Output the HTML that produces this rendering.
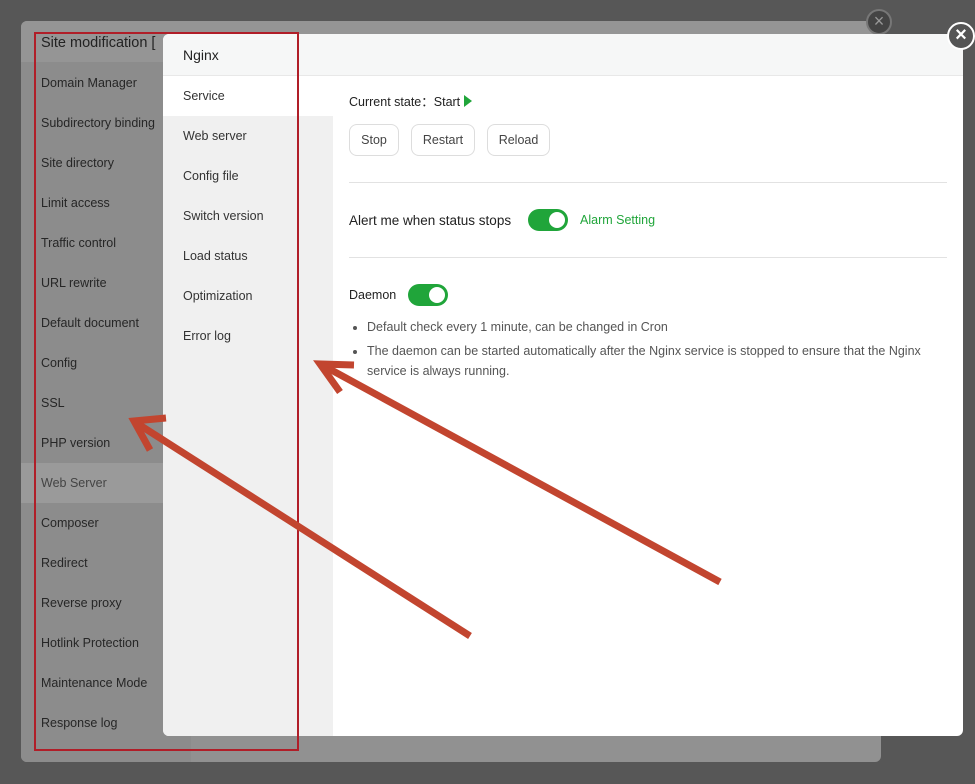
<!DOCTYPE html>
<html><head><style>
*{margin:0;padding:0;box-sizing:border-box}
body{width:975px;height:784px;background:#575757;font-family:"Liberation Sans",sans-serif;position:relative;overflow:hidden;font-size:13px;color:#333}
.abs{position:absolute}
.back{left:21px;top:21px;width:860px;height:741px;background:#919191;border-radius:6px;overflow:hidden}
.bside{left:0;top:41px;width:170px;height:700px;background:#8c8c8c}
.bitem{position:absolute;left:20px;color:#262626;font-size:12.5px}
.front{left:163px;top:34px;width:800px;height:702px;background:#fff;border-radius:6px;overflow:hidden}
.fhead{left:0;top:0;width:800px;height:42px;background:#f6f7f7;border-bottom:1px solid #e8e8e8;padding:13px 20px;font-size:14px;color:#222}
.fside{left:0;top:42px;width:170px;height:660px;background:#f0f0f0}
.fitem{position:absolute;left:20px;font-size:12.5px;color:#333}
.btn{position:absolute;top:90px;height:32px;border:1px solid #ddd;border-radius:8px;font-size:12.5px;color:#444;text-align:center;line-height:30px;background:#fff}
.sw{position:absolute;width:40px;height:22px;border-radius:11px;background:#20a53a}
.sw:after{content:"";position:absolute;right:3px;top:3px;width:16px;height:16px;border-radius:50%;background:#fff}
.hr{position:absolute;left:186px;width:598px;height:1px;background:#e2e2e2}
</style></head><body>
<div class="abs back">
 <div class="abs" style="left:0;top:0;width:860px;height:41px;background:#959595"></div>
 <div style="position:absolute;left:20px;top:14px;font-size:14.5px;color:#222">Site modification [</div>
 <div class="abs bside"></div>
 <div class="abs" style="left:0;top:442px;width:170px;height:40px;background:#9a9a9a"></div>
 <div class="bitem" style="top:55px">Domain Manager</div>
 <div class="bitem" style="top:95px">Subdirectory binding</div>
 <div class="bitem" style="top:135px">Site directory</div>
 <div class="bitem" style="top:175px">Limit access</div>
 <div class="bitem" style="top:215px">Traffic control</div>
 <div class="bitem" style="top:255px">URL rewrite</div>
 <div class="bitem" style="top:295px">Default document</div>
 <div class="bitem" style="top:335px">Config</div>
 <div class="bitem" style="top:375px">SSL</div>
 <div class="bitem" style="top:415px">PHP version</div>
 <div class="bitem" style="top:455px;color:#444">Web Server</div>
 <div class="bitem" style="top:495px">Composer</div>
 <div class="bitem" style="top:535px">Redirect</div>
 <div class="bitem" style="top:575px">Reverse proxy</div>
 <div class="bitem" style="top:615px">Hotlink Protection</div>
 <div class="bitem" style="top:655px">Maintenance Mode</div>
 <div class="bitem" style="top:695px">Response log</div>
</div>
<div class="abs" style="left:866px;top:9px;width:26px;height:26px;border-radius:50%;background:#444;border:2px solid #777;color:#999;font-size:18px;line-height:21px;text-align:center">×</div>
<div class="abs front">
 <div class="abs fhead">Nginx</div>
 <div class="abs fside"></div>
 <div class="abs" style="left:0;top:42px;width:170px;height:40px;background:#fff"></div>
 <div class="fitem" style="top:55px">Service</div>
 <div class="fitem" style="top:95px">Web server</div>
 <div class="fitem" style="top:135px">Config file</div>
 <div class="fitem" style="top:175px">Switch version</div>
 <div class="fitem" style="top:215px">Load status</div>
 <div class="fitem" style="top:255px">Optimization</div>
 <div class="fitem" style="top:295px">Error log</div>
 <div class="abs" style="left:186px;top:57px;font-size:12.5px;color:#222">Current state：Start <span style="display:inline-block;width:0;height:0;border-left:8px solid #20a53a;border-top:6px solid transparent;border-bottom:6px solid transparent;vertical-align:-1px"></span></div>
 <div class="btn" style="left:186px;width:50px">Stop</div>
 <div class="btn" style="left:248px;width:64px">Restart</div>
 <div class="btn" style="left:324px;width:63px">Reload</div>
 <div class="hr" style="top:148px"></div>
 <div class="abs" style="left:186px;top:179px;font-size:13.5px;color:#222">Alert me when status stops</div>
 <div class="sw" style="left:365px;top:175px"></div>
 <div class="abs" style="left:417px;top:179px;font-size:12.5px;color:#20a53a">Alarm Setting</div>
 <div class="hr" style="top:223px"></div>
 <div class="abs" style="left:186px;top:254px;font-size:12.5px;color:#222">Daemon</div>
 <div class="sw" style="left:245px;top:250px"></div>
 <ul class="abs" style="left:204px;top:283px;width:585px;font-size:12.5px;color:#555;line-height:20px">
  <li style="margin-bottom:4px">Default check every 1 minute, can be changed in Cron</li>
  <li>The daemon can be started automatically after the Nginx service is stopped to ensure that the Nginx service is always running.</li>
 </ul>
</div>
<div class="abs" style="left:947px;top:22px;width:28px;height:28px;border-radius:50%;background:#555;border:2px solid #fff;color:#fff;font-size:20px;line-height:22px;text-align:center;font-weight:bold">×</div>
<div class="abs" style="left:34px;top:32px;width:265px;height:719px;border:2px solid #b01e28"></div>
<svg class="abs" style="left:0;top:0" width="975" height="784">
 <g stroke="#c2452f" stroke-width="7" fill="none" stroke-linecap="butt">
  <line x1="470" y1="636" x2="138" y2="424"/>
  <polyline points="166,418 134,421 150,450"/>
  <line x1="720" y1="582" x2="324" y2="366"/>
  <polyline points="354,365 320,364 340,392"/>
 </g>
</svg>
</body></html>
